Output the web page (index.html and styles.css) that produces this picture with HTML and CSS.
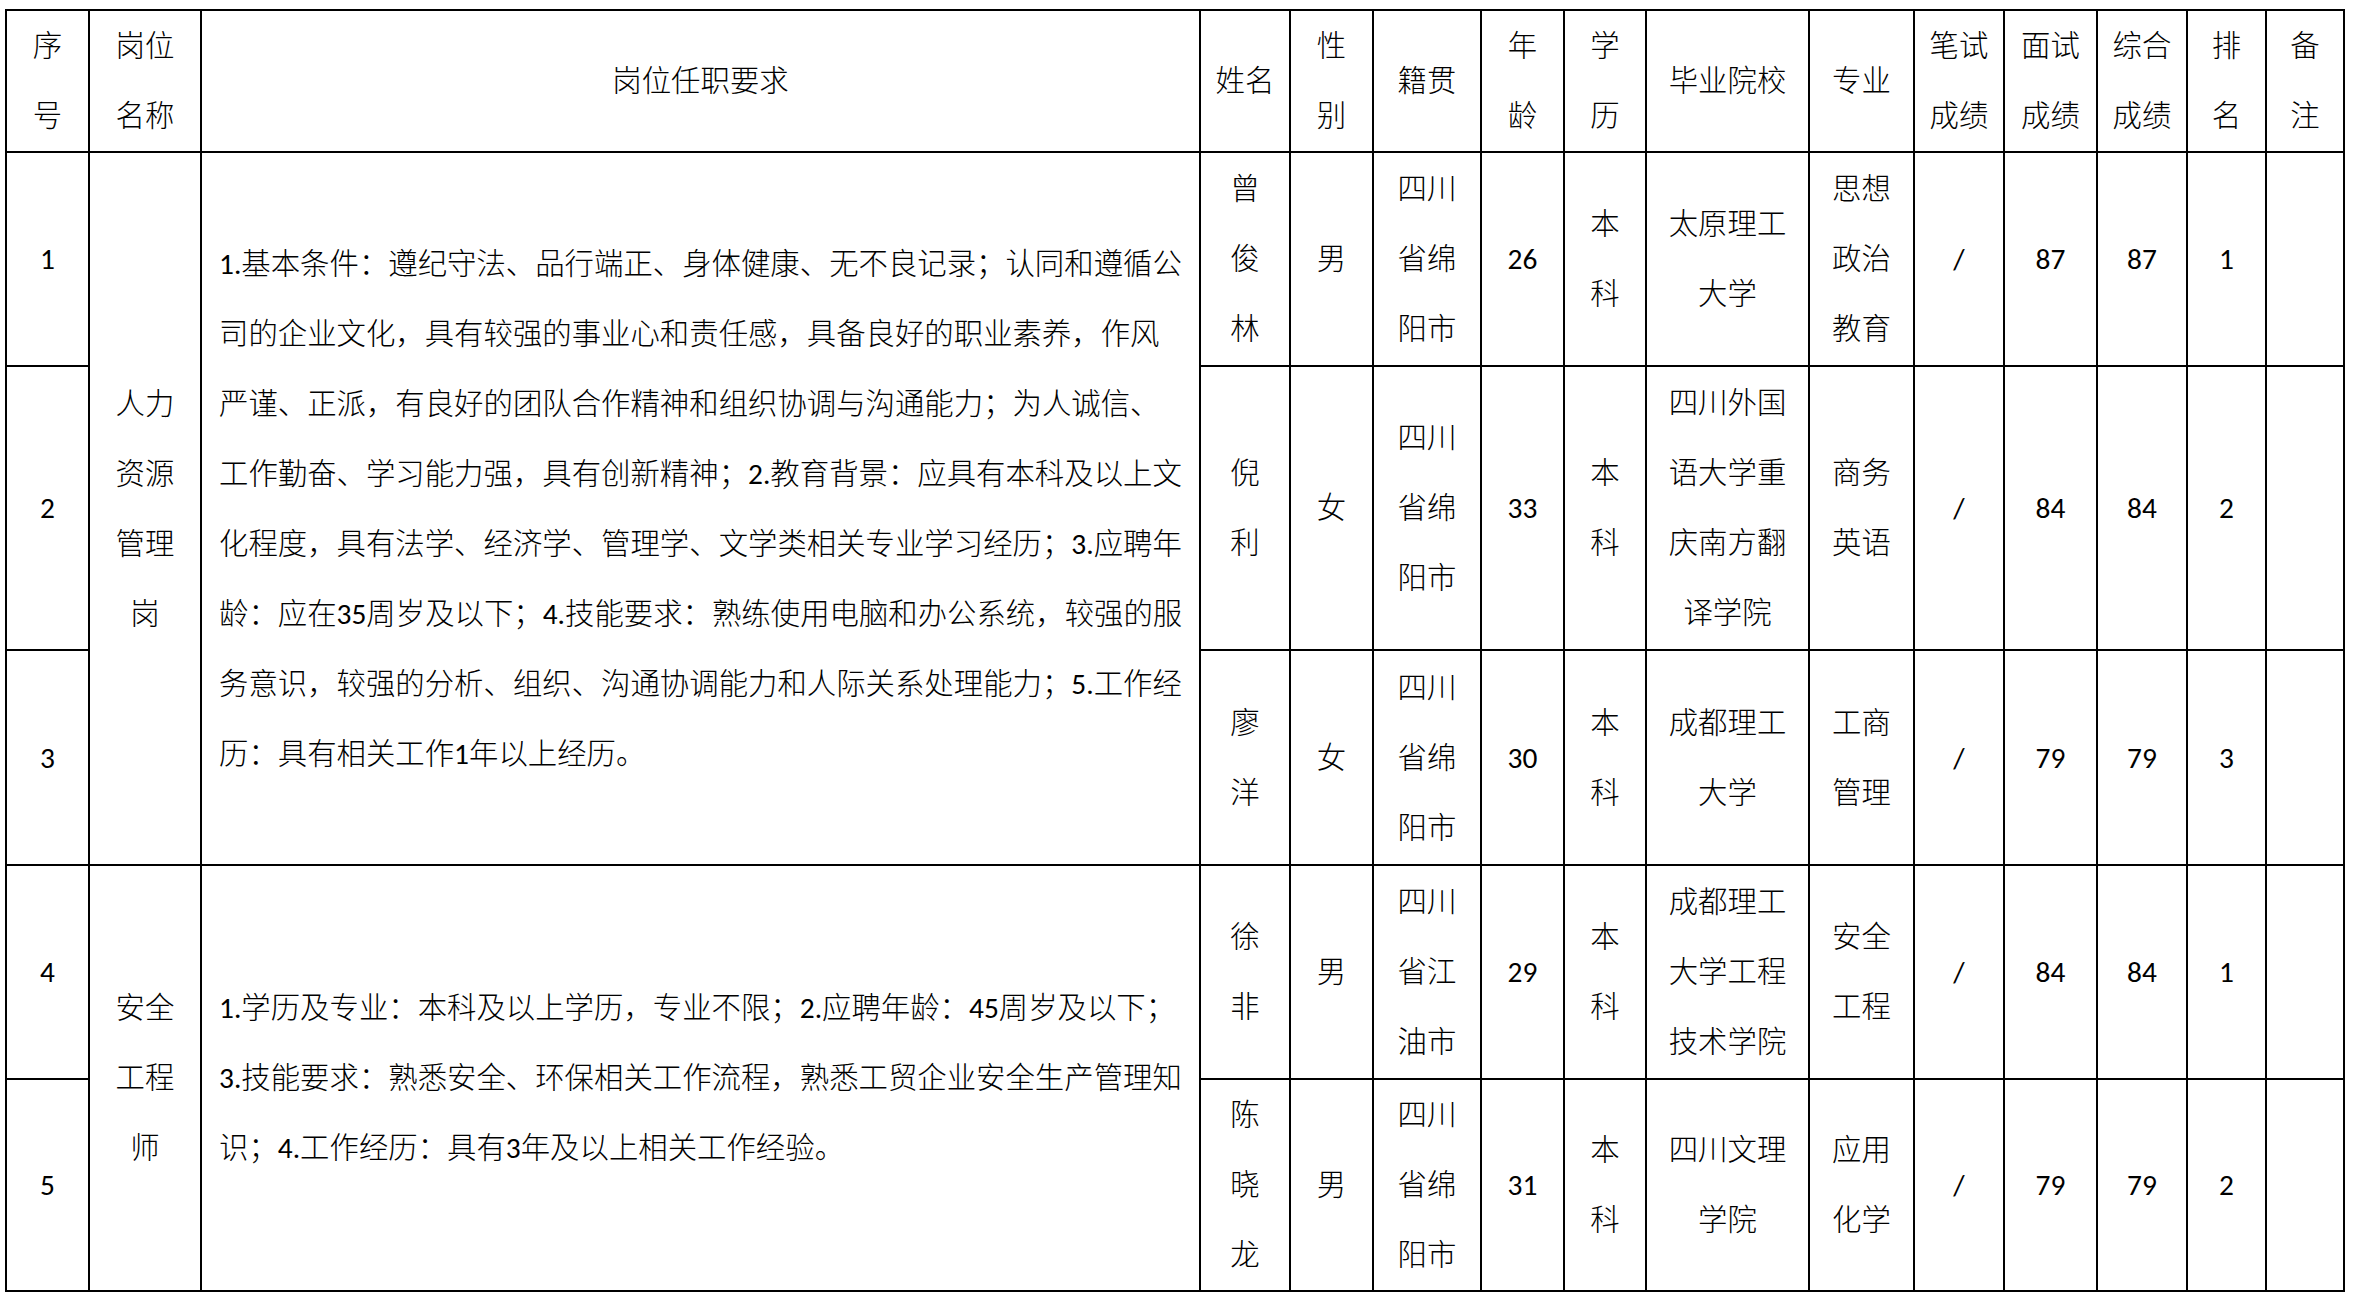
FILE: index.html
```html
<!DOCTYPE html>
<html lang="zh-CN">
<head>
<meta charset="utf-8">
<title>拟聘人员名单</title>
<link rel="stylesheet" href="styles.css">
</head>
<body>
<table class="grid">
  <colgroup>
    <col class="w-no"><col class="w-post"><col class="w-req"><col class="w-name"><col class="w-sex">
    <col class="w-home"><col class="w-age"><col class="w-edu"><col class="w-school"><col class="w-major">
    <col class="w-s1"><col class="w-s2"><col class="w-s3"><col class="w-rank"><col class="w-note">
  </colgroup>
  <thead>
    <tr class="r-head">
      <th>序<br>号</th>
      <th>岗位<br>名称</th>
      <th>岗位任职要求</th>
      <th>姓名</th>
      <th>性<br>别</th>
      <th>籍贯</th>
      <th>年<br>龄</th>
      <th>学<br>历</th>
      <th>毕业院校</th>
      <th>专业</th>
      <th>笔试<br>成绩</th>
      <th>面试<br>成绩</th>
      <th>综合<br>成绩</th>
      <th>排<br>名</th>
      <th>备<br>注</th>
    </tr>
  </thead>
  <tbody>
    <tr class="r-1">
      <td class="num">1</td>
      <td rowspan="3">人力<br>资源<br>管理<br>岗</td>
      <td rowspan="3" class="req">1.基本条件：遵纪守法、品行端正、身体健康、无不良记录；认同和遵循公<br>司的企业文化，具有较强的事业心和责任感，具备良好的职业素养，作风<br>严谨、正派，有良好的团队合作精神和组织协调与沟通能力；为人诚信、<br>工作勤奋、学习能力强，具有创新精神；2.教育背景：应具有本科及以上文<br>化程度，具有法学、经济学、管理学、文学类相关专业学习经历；3.应聘年<br>龄：应在35周岁及以下；4.技能要求：熟练使用电脑和办公系统，较强的服<br>务意识，较强的分析、组织、沟通协调能力和人际关系处理能力；5.工作经<br>历：具有相关工作1年以上经历。</td>
      <td>曾<br>俊<br>林</td>
      <td>男</td>
      <td>四川<br>省绵<br>阳市</td>
      <td class="num">26</td>
      <td>本<br>科</td>
      <td>太原理工<br>大学</td>
      <td>思想<br>政治<br>教育</td>
      <td class="num">/</td>
      <td class="num">87</td>
      <td class="num">87</td>
      <td class="num">1</td>
      <td></td>
    </tr>
    <tr class="r-2">
      <td class="num">2</td>
      <td>倪<br>利</td>
      <td>女</td>
      <td>四川<br>省绵<br>阳市</td>
      <td class="num">33</td>
      <td>本<br>科</td>
      <td>四川外国<br>语大学重<br>庆南方翻<br>译学院</td>
      <td>商务<br>英语</td>
      <td class="num">/</td>
      <td class="num">84</td>
      <td class="num">84</td>
      <td class="num">2</td>
      <td></td>
    </tr>
    <tr class="r-3">
      <td class="num">3</td>
      <td>廖<br>洋</td>
      <td>女</td>
      <td>四川<br>省绵<br>阳市</td>
      <td class="num">30</td>
      <td>本<br>科</td>
      <td>成都理工<br>大学</td>
      <td>工商<br>管理</td>
      <td class="num">/</td>
      <td class="num">79</td>
      <td class="num">79</td>
      <td class="num">3</td>
      <td></td>
    </tr>
    <tr class="r-4">
      <td class="num">4</td>
      <td rowspan="2">安全<br>工程<br>师</td>
      <td rowspan="2" class="req">1.学历及专业：本科及以上学历，专业不限；2.应聘年龄：45周岁及以下；<br>3.技能要求：熟悉安全、环保相关工作流程，熟悉工贸企业安全生产管理知<br>识；4.工作经历：具有3年及以上相关工作经验。</td>
      <td>徐<br>非</td>
      <td>男</td>
      <td>四川<br>省江<br>油市</td>
      <td class="num">29</td>
      <td>本<br>科</td>
      <td>成都理工<br>大学工程<br>技术学院</td>
      <td>安全<br>工程</td>
      <td class="num">/</td>
      <td class="num">84</td>
      <td class="num">84</td>
      <td class="num">1</td>
      <td></td>
    </tr>
    <tr class="r-5">
      <td class="num">5</td>
      <td>陈<br>晓<br>龙</td>
      <td>男</td>
      <td>四川<br>省绵<br>阳市</td>
      <td class="num">31</td>
      <td>本<br>科</td>
      <td>四川文理<br>学院</td>
      <td>应用<br>化学</td>
      <td class="num">/</td>
      <td class="num">79</td>
      <td class="num">79</td>
      <td class="num">2</td>
      <td></td>
    </tr>
  </tbody>
</table>
</body>
</html>
```

FILE: styles.css
```css
html, body {
  margin: 0;
  padding: 0;
  background: #ffffff;
}

body {
  font-family: "Carlito", "Lato", "Noto Sans CJK SC", sans-serif;
  font-size: 29.4px;
  font-weight: 300;
  color: #000000;
}

.grid {
  border-collapse: collapse;
  table-layout: fixed;
  width: 2338px;
  margin: 9px 0 0 5px;
}

.grid th,
.grid td {
  border: 2px solid #000000;
  padding: 0;
  text-align: center;
  vertical-align: middle;
  font-weight: 300;
  line-height: 70px;
  white-space: nowrap;
  overflow: hidden;
}

.grid td.req {
  text-align: left;
  padding-left: 17px;
}

.grid td.num {
  font-size: 29.4px;
}

.w-no { width: 83px; }
.w-post { width: 112px; }
.w-req { width: 999px; }
.w-name { width: 90px; }
.w-sex { width: 83px; }
.w-home { width: 108px; }
.w-age { width: 83px; }
.w-edu { width: 82px; }
.w-school { width: 163px; }
.w-major { width: 105px; }
.w-s1 { width: 90px; }
.w-s2 { width: 93px; }
.w-s3 { width: 90px; }
.w-rank { width: 79px; }
.w-note { width: 78px; }

.r-head { height: 142px; }
.r-1 { height: 214px; }
.r-2 { height: 284px; }
.r-3 { height: 215px; }
.r-4 { height: 214px; }
.r-5 { height: 212px; }
```
